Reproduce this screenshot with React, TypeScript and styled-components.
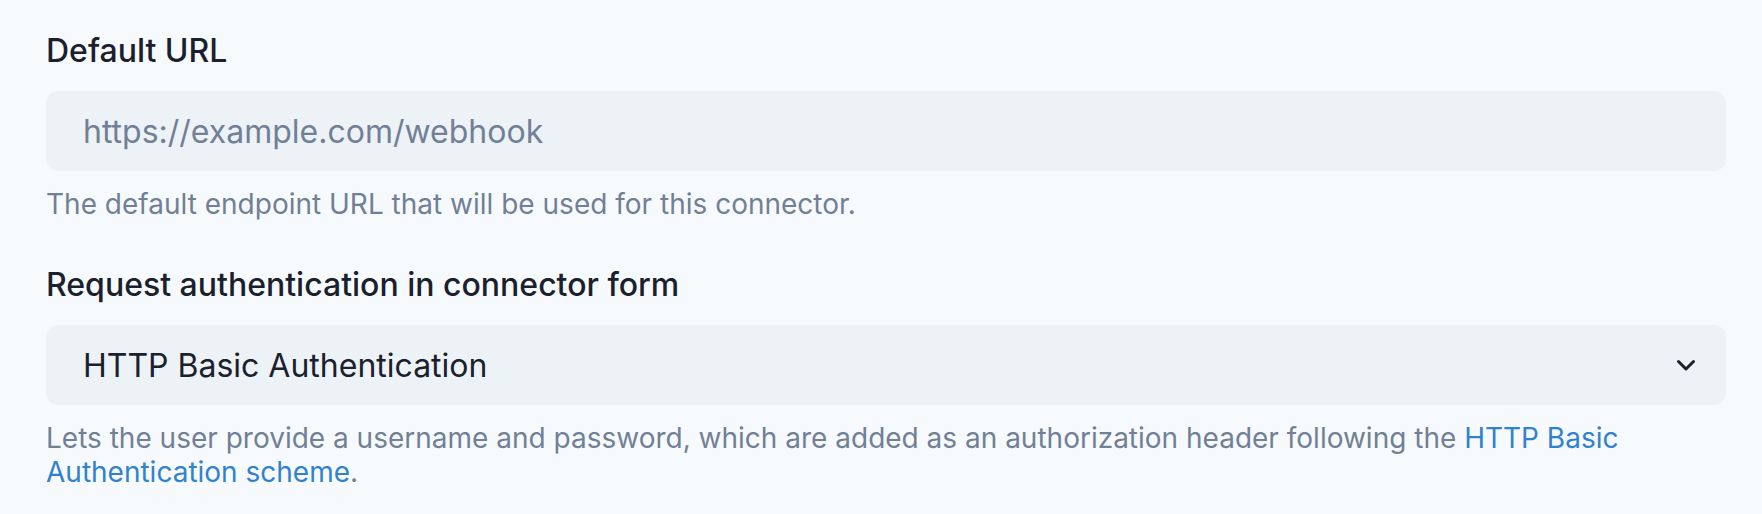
import React from 'react';
import styled, { createGlobalStyle } from 'styled-components';

const GlobalStyle = createGlobalStyle`
html, body {
  margin: 0;
  padding: 0;
  background: #f7fafc;
  font-family: Inter, "Noto Sans", sans-serif;
  color: #1a202c;
}
`;

const Page = styled.div`
box-sizing: border-box;
width: 100%;
min-height: 514px;
padding: 27px 36px 0 46px;
`;

const FormControl = styled.div`
display: flex;
flex-direction: column;
margin-bottom: 40px;
`;

const Label = styled.label`
display: block;
margin-bottom: 16px;
font-size: 32px;
font-weight: 500;
line-height: 48px;
color: #1a202c;
`;

const fieldStyles = `
box-sizing: border-box;
width: 100%;
height: 80px;
margin: 0;
padding: 0 34px 0 35px;
border: 2px solid transparent;
border-radius: 12px;
background: #edf2f7;
font-family: Inter, "Noto Sans", sans-serif;
font-size: 32px;
color: #1a202c;
outline: none;
`;

const TextInput = styled.input`
${fieldStyles}

&::placeholder {
  color: #718096;
  opacity: 1;
}
`;

const SelectWrap = styled.div`
position: relative;
width: 100%;
`;

const Select = styled.select`
${fieldStyles}
display: block;
appearance: none;
-webkit-appearance: none;
padding-right: 80px;
`;

const Chevron = styled.svg`
position: absolute;
top: 50%;
right: 28px;
width: 24px;
height: 24px;
transform: translateY(-50%);
pointer-events: none;
`;

const HelpText = styled.div`
margin-top: 16px;
font-size: 28px;
line-height: 34px;
color: #718096;
`;

const Link = styled.a`
color: #3182ce;
text-decoration: none;
`;

function App() {
  return (
    <>
      <GlobalStyle />
      <Page>
        <FormControl>
          <Label htmlFor="default-url">Default URL</Label>
          <TextInput id="default-url" placeholder="https://example.com/webhook" />
          <HelpText>The default endpoint URL that will be used for this connector.</HelpText>
        </FormControl>
        <FormControl>
          <Label htmlFor="auth-mode">Request authentication in connector form</Label>
          <SelectWrap>
            <Select id="auth-mode" defaultValue="basic">
              <option value="none">None</option>
              <option value="basic">HTTP Basic Authentication</option>
            </Select>
            <Chevron viewBox="0 0 24 24" fill="none">
              <path d="M4.5 8.5 12 16l7.5-7.5" stroke="#1a202c" strokeWidth="3" strokeLinecap="round" strokeLinejoin="round" />
            </Chevron>
          </SelectWrap>
          <HelpText>
            Lets the user provide a username and password, which are added as an authorization header following the{' '}
            <Link href="#">HTTP Basic Authentication scheme</Link>.
          </HelpText>
        </FormControl>
      </Page>
    </>
  );
}

export default App;
